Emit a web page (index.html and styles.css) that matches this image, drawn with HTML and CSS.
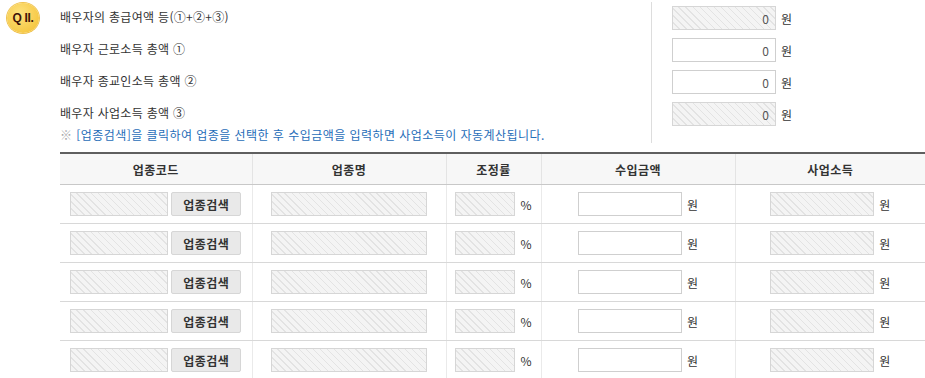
FILE: index.html
```html
<!DOCTYPE html>
<html lang="ko">
<head>
  <meta charset="UTF-8">
  <meta name="viewport" content="width=device-width, initial-scale=1.0">
  <title>배우자 소득</title>
  <link rel="stylesheet" href="styles.css">
</head>
<body>
  <!-- 배우자 소득 요약 -->
  <div class="summary">
    <div class="badge-col">
      <div class="badge">Q II.</div>
    </div>
    <div class="labels">
      <div class="label-row">배우자의 총급여액 등(①+②+③)</div>
      <div class="label-row">배우자 근로소득 총액 ①</div>
      <div class="label-row">배우자 종교인소득 총액 ②</div>
      <div class="label-row">배우자 사업소득 총액 ③</div>
      <div class="notice"><span class="notice-mark">※</span> [업종검색]을 클릭하여 업종을 선택한 후 수입금액을 입력하면 사업소득이 자동계산됩니다.</div>
    </div>
    <div class="values">
      <div class="value-row"><input type="text" class="field field-amount readonly" value="0" readonly> <span class="unit">원</span></div>
      <div class="value-row"><input type="text" class="field field-amount" value="0"> <span class="unit">원</span></div>
      <div class="value-row"><input type="text" class="field field-amount" value="0"> <span class="unit">원</span></div>
      <div class="value-row"><input type="text" class="field field-amount readonly" value="0" readonly> <span class="unit">원</span></div>
    </div>
  </div>

  <!-- 업종별 사업소득 -->
  <table class="biz-table">
    <colgroup>
      <col class="col-code">
      <col class="col-name">
      <col class="col-rate">
      <col class="col-income">
      <col class="col-profit">
    </colgroup>
    <thead>
      <tr>
        <th>업종코드</th>
        <th>업종명</th>
        <th>조정률</th>
        <th>수입금액</th>
        <th>사업소득</th>
      </tr>
    </thead>
    <tbody id="biz-rows"></tbody>
  </table>

  <script>
    var tbody = document.getElementById("biz-rows");
    for (var i = 0; i < 5; i++) {
      var tr = document.createElement("tr");
      tr.innerHTML =
        '<td><div class="cell"><input type="text" class="field field-code readonly" readonly><button class="btn-search">업종검색</button></div></td>' +
        '<td><div class="cell"><input type="text" class="field field-name readonly" readonly></div></td>' +
        '<td><div class="cell"><input type="text" class="field field-rate readonly" readonly><span class="unit">%</span></div></td>' +
        '<td><div class="cell"><input type="text" class="field field-income"><span class="unit">원</span></div></td>' +
        '<td><div class="cell"><input type="text" class="field field-profit readonly" readonly><span class="unit">원</span></div></td>';
      tbody.appendChild(tr);
    }
  </script>
</body>
</html>
```

FILE: styles.css
```css
body {
  margin: 0;
  font-family: "Noto Sans CJK KR", "Liberation Sans", sans-serif;
  font-size: 12px;
  color: #333;
  background-color: #fff;
}
.summary {
  display: flex;
  height: 144px;
}
.badge-col {
  width: 60px;
  flex-shrink: 0;
  padding: 3px 0 0 7px;
  box-sizing: border-box;
}
.badge {
  width: 32px;
  height: 30px;
  border-radius: 50%;
  background: radial-gradient(circle at 40% 35%, #fde27e, #f4bf2f);
  box-shadow: 0 0 0 1px #efc24d;
  color: #3e1408;
  font-family: "Liberation Sans", sans-serif;
  font-weight: bold;
  font-size: 12px;
  line-height: 30px;
  text-align: center;
  letter-spacing: -0.3px;
  white-space: nowrap;
}
.labels {
  width: 591px;
  flex-shrink: 0;
  padding-top: 1px;
}
.label-row {
  height: 32px;
  line-height: 32px;
  letter-spacing: 0.3px;
}
.notice {
  line-height: 12px;
  color: #1f6db8;
  letter-spacing: 0.45px;
}
.notice-mark {
  color: #a8a8a8;
}
.values {
  margin-top: 2px;
  border-left: 1px solid #ddd;
  padding-left: 20px;
  height: 141px;
}
.value-row {
  height: 32px;
  display: flex;
  align-items: center;
  padding: 4px 0;
  box-sizing: border-box;
}
.field {
  height: 24px;
  border: 1px solid #cfcfcf;
  box-sizing: border-box;
  padding: 0 6px;
  margin: 0;
  font-family: "Noto Sans CJK KR", "Liberation Sans", sans-serif;
  font-size: 12px;
  color: #555;
  background-color: #fff;
  outline: none;
}
.field.readonly {
  border-color: #d6d6d6;
  background-color: #f4f4f4;
  background-image: repeating-linear-gradient(45deg, #f4f4f4 0, #f4f4f4 4px, #e3e3e3 4px, #e3e3e3 5px);
}
.field-amount {
  width: 104px;
  text-align: right;
}
.unit {
  margin-left: 5px;
  color: #333;
}
.biz-table {
  margin-left: 60px;
  margin-top: 8px;
  width: 865px;
  border-collapse: collapse;
  table-layout: fixed;
  border-top: 2px solid #5f5f5f;
}
.col-code { width: 192px; }
.col-name { width: 194px; }
.col-rate { width: 95px; }
.col-income { width: 194px; }
.col-profit { width: 190px; }
.biz-table th {
  height: 30px;
  padding: 0;
  background-color: #f7f7f7;
  border-bottom: 1px solid #c8c8c8;
  border-left: 1px solid #e4e4e4;
  font-weight: bold;
  color: #333;
  letter-spacing: 0.5px;
}
.biz-table td {
  height: 38px;
  padding: 0;
  border-bottom: 1px solid #d8d8d8;
  border-left: 1px solid #eaeaea;
}
.biz-table th:first-child,
.biz-table td:first-child {
  border-left: none;
}
.cell {
  display: flex;
  justify-content: center;
  align-items: center;
}
.field-code {
  width: 98px;
}
.btn-search {
  width: 70px;
  height: 24px;
  margin-left: 3px;
  border: 1px solid #d6d6d6;
  border-radius: 2px;
  background-color: #e9e9e9;
  font-family: "Noto Sans CJK KR", "Liberation Sans", sans-serif;
  font-size: 12px;
  font-weight: bold;
  color: #333;
  padding: 0;
  letter-spacing: 0.5px;
  cursor: pointer;
}
.field-name {
  width: 156px;
}
.field-rate {
  width: 60px;
}
.field-income {
  width: 104px;
}
.field-profit {
  width: 104px;
}
.cell .unit {
  margin-left: 5px;
}
```
